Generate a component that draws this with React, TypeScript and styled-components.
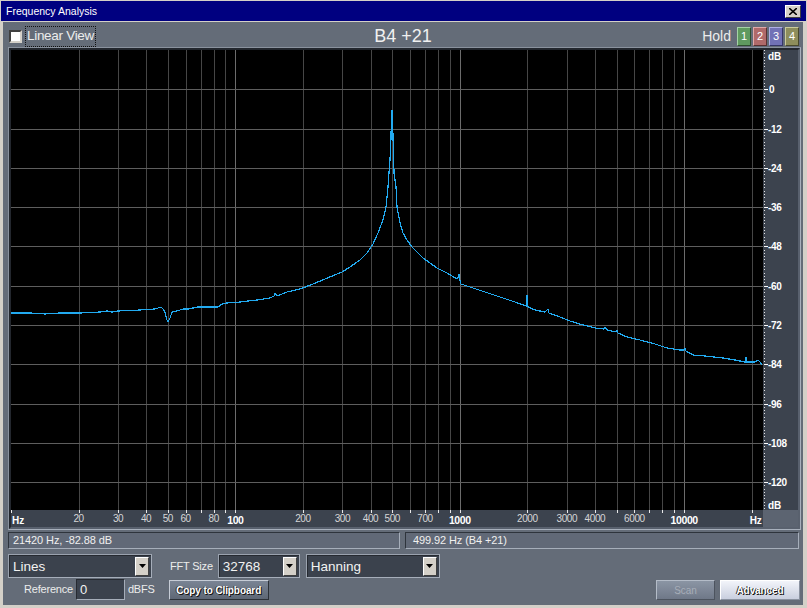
import React from "react";
import styled, { createGlobalStyle } from "styled-components";

const GlobalStyle = createGlobalStyle`
  html, body { margin: 0; padding: 0; background: #d4d0c8; }
  body { font-family: "Liberation Sans", Arial, sans-serif; }
  * { box-sizing: border-box; }
`;

// chart geometry
const PLOT_W = 752;
const PLOT_H = 460;
const PX_PER_DECADE = 224.4;
const PX_PER_DB = 39.28 / 12;
const fx = (f: number) => (Math.log10(f) - 1) * PX_PER_DECADE;
const dby = (db: number) => (12 - db) * PX_PER_DB;

// spectrum traced from the capture (absolute window pixels)
const CURVE: [number, number][] = [
  [11, 313], [30, 313], [45, 314], [60, 313], [80, 313], [100, 312], [107, 311], [112, 312],
  [118, 311], [140, 310], [155, 309], [161, 307], [163, 309], [165, 312], [167, 320], [168, 322],
  [170, 318], [172, 312], [177, 311], [183, 309], [188, 309], [198, 307], [218, 307], [222, 304],
  [227, 303], [240, 302], [257, 300], [270, 298], [274, 296], [275, 293], [277, 296], [287, 292],
  [300, 289], [313, 284], [325, 279], [342, 272], [350, 267], [360, 260], [367, 253], [373, 244],
  [378, 233], [383, 220], [386, 207], [388, 187], [389, 173], [390, 160], [390.5, 148], [391, 138],
  [391.5, 111], [392.5, 111], [393, 138], [393.5, 150], [394, 173], [396, 187], [397, 207], [400, 223],
  [403, 233], [407, 240], [412, 247], [423, 258], [437, 268], [447, 273], [457, 279], [458, 278],
  [459, 274], [460, 281], [461, 284], [470, 287], [485, 292], [500, 297], [515, 302], [526, 306],
  [527, 295], [528, 307], [535, 310], [545, 312], [548, 309], [549, 313], [560, 317], [570, 321],
  [583, 325], [595, 328], [604, 329], [605, 327], [607, 330], [616, 332], [617, 330], [618, 333],
  [627, 337], [640, 340], [655, 344], [667, 348], [680, 350], [684, 350], [685, 348], [686, 351],
  [693, 355], [705, 356], [723, 358], [735, 360], [745, 362], [746, 357], [747, 362], [755, 362],
  [758, 360], [760, 362], [762, 365],
];

const GRID_FREQS: number[] = [];
[10, 100, 1000, 10000].forEach((d) => {
  for (let m = 1; m <= 9; m++) {
    const f = m * d;
    if (f > 10 && f <= 22050) GRID_FREQS.push(f);
  }
});

const AXIS_LABELS: { f: number; text: string; major?: boolean }[] = [
  { f: 20, text: "20" }, { f: 30, text: "30" }, { f: 40, text: "40" }, { f: 50, text: "50" },
  { f: 60, text: "60" }, { f: 80, text: "80" }, { f: 100, text: "100", major: true },
  { f: 200, text: "200" }, { f: 300, text: "300" }, { f: 400, text: "400" }, { f: 500, text: "500" },
  { f: 700, text: "700" }, { f: 1000, text: "1000", major: true }, { f: 2000, text: "2000" },
  { f: 3000, text: "3000" }, { f: 4000, text: "4000" }, { f: 6000, text: "6000" },
  { f: 10000, text: "10000", major: true },
];

const DB_LEVELS = [0, -12, -24, -36, -48, -60, -72, -84, -96, -108, -120];

const Window = styled.div`
  width: 807px;
  height: 608px;
  padding: 1px;
  background: #d4d0c8;
  display: flex;
  flex-direction: column;
`;

const TitleBar = styled.div`
  height: 20px;
  background: #000080;
  display: flex;
  align-items: center;
  justify-content: space-between;
  padding: 0 5px 0 5px;
`;

const TitleText = styled.span`
  color: #fff;
  font-size: 10.5px;
`;

const CloseBtn = styled.div`
  width: 16px;
  height: 13px;
  margin-top: 1px;
  background: #d4d0c8;
  border: 1px solid;
  border-color: #fff #404040 #404040 #fff;
  display: flex;
  align-items: center;
  justify-content: center;
`;

const Body = styled.div`
  flex: 1;
  margin: 1px 3px 2px 2px;
  background: #646c78;
  padding: 0 2px 0 5px;
  display: flex;
  flex-direction: column;
`;

const Toolbar = styled.div`
  height: 25px;
  padding-top: 3px;
  display: grid;
  grid-template-columns: 1fr auto 1fr;
  align-items: center;
`;

const CheckWrap = styled.div`
  display: flex;
  align-items: center;
  gap: 3px;
  margin-left: 1px;
`;

const CheckBox = styled.div`
  width: 13px;
  height: 13px;
  background: #fff;
  border: 2px solid;
  border-color: #404040 #d4d0c8 #d4d0c8 #404040;
`;

const CheckLabel = styled.span`
  color: #ececec;
  font-size: 13.5px;
  letter-spacing: -0.3px;
  padding: 1px 1px 2px 1px;
  border: 1px dotted #111;
  line-height: 16px;
`;

const NoteTitle = styled.div`
  color: #f0f0f0;
  font-size: 18px;
  line-height: 20px;
  padding-right: 3px;
`;

const HoldGroup = styled.div`
  justify-self: end;
  display: flex;
  align-items: center;
  gap: 2px;
  margin-right: 2px;
`;

const HoldLabel = styled.span`
  color: #ececec;
  font-size: 14px;
  margin-right: 4px;
`;

const HoldBtn = styled.div<{ $bg: string; $hi: string; $lo: string }>`
  width: 14px;
  height: 19px;
  background: ${(p) => p.$bg};
  border: 1px solid;
  border-color: ${(p) => p.$hi} ${(p) => p.$lo} ${(p) => p.$lo} ${(p) => p.$hi};
  color: #fff;
  font-size: 11px;
  display: flex;
  align-items: center;
  justify-content: center;
`;

const GraphFrame = styled.div`
  border: 1px solid;
  border-color: #8a929e #a8b0bc #a8b0bc #8a929e;
`;

const GraphInner = styled.div`
  border: 2px solid;
  border-color: #23272e #59616e #59616e #23272e;
  display: grid;
  grid-template-columns: ${PLOT_W}px 35px;
  grid-template-rows: ${PLOT_H}px 17px;
`;

const PlotCell = styled.div`
  background: #000;
  display: flex;
`;

const ScaleCell = styled.div`
  background: #3c434e;
  display: flex;
`;

const CornerCell = styled.div`
  background: #5c6471;
`;

const StatusRow = styled.div`
  margin-top: 2px;
  display: grid;
  grid-template-columns: 392px 1fr;
  gap: 5px;
  padding-right: 2px;
`;

const StatusField = styled.div`
  height: 17px;
  background: #616977;
  border: 1px solid;
  border-color: #2e343c #a6aeba #a6aeba #2e343c;
  color: #f0f0f0;
  font-size: 11px;
  line-height: 15px;
  padding-left: 4px;
  letter-spacing: -0.1px;
`;

const ControlRow = styled.div<{ $top: number; $h: number }>`
  margin-top: ${(p) => p.$top}px;
  height: ${(p) => p.$h}px;
  display: flex;
  align-items: center;
`;

const Combo = styled.div<{ $w: number; $ml?: number }>`
  width: ${(p) => p.$w}px;
  height: 24px;
  margin-left: ${(p) => p.$ml ?? 0}px;
  background: #3b424d;
  border: 1px solid;
  border-color: #9aa2ae #a6aeba #a6aeba #9aa2ae;
  box-shadow: inset 1px 1px 0 #262a31;
  display: flex;
  align-items: center;
  justify-content: space-between;
  padding: 0 2px 0 4px;
  color: #f2f2f2;
  font-size: 13.5px;
`;

const DropBtn = styled.div`
  width: 14px;
  height: 19px;
  background: #d4d0c8;
  border: 1px solid;
  border-color: #fff #404040 #404040 #fff;
  display: flex;
  align-items: center;
  justify-content: center;
`;

const FieldLabel = styled.span<{ $ml: number }>`
  margin-left: ${(p) => p.$ml}px;
  color: #ececec;
  font-size: 11px;
  letter-spacing: -0.2px;
`;

const NumInput = styled.div`
  width: 49px;
  height: 21px;
  margin-left: 3px;
  background: #3b424d;
  border: 1px solid;
  border-color: #262a31 #a6aeba #a6aeba #262a31;
  color: #f2f2f2;
  font-size: 13px;
  line-height: 19px;
  padding-left: 3px;
`;

const PushBtn = styled.div<{ $w: number; $ml: number; $kind: "normal" | "disabled" | "light" }>`
  width: ${(p) => p.$w}px;
  height: 20px;
  margin-left: ${(p) => p.$ml}px;
  margin-top: 2px;
  display: flex;
  align-items: center;
  justify-content: center;
  font-size: 10px;
  font-weight: 700;
  letter-spacing: -0.1px;
  border: 1px solid;
  ${(p) =>
    p.$kind === "light"
      ? `background: linear-gradient(#f2f4fa, #c9cfdf);
         border-color: #ffffff #8a92a0 #8a92a0 #ffffff;
         color: #ffffff;
         text-shadow: 1px 1px 0 #111, -1px 0 0 #333;`
      : p.$kind === "disabled"
      ? `background: linear-gradient(#8b95a4, #6f7888);
         border-color: #b4bcc8 #4c535e #4c535e #b4bcc8;
         color: #a7aeb9;
         font-weight: 400;
         text-shadow: 1px 1px 0 #7d8694;`
      : `background: linear-gradient(#7a8494, #5e6775);
         border-color: #c6ccd6 #2c3138 #2c3138 #c6ccd6;
         color: #ffffff;
         text-shadow: 1px 1px 0 #111, -1px 0 0 #333;`}
`;

const Spacer = styled.div`
  flex: 1;
`;

const DownArrow = () => (
  <svg width="7" height="4" viewBox="0 0 7 4">
    <path d="M0 0H7L3.5 4Z" fill="#000" />
  </svg>
);

const Plot = () => (
  <svg width={PLOT_W} height={PLOT_H} shapeRendering="crispEdges">
    {GRID_FREQS.map((f) => {
      const major = f === 100 || f === 1000 || f === 10000;
      const x = Math.round(fx(f)) + 0.5;
      return (
        <line key={f} x1={x} x2={x} y1={0} y2={PLOT_H} stroke={major ? "#6c6c6c" : "#464646"} />
      );
    })}
    {DB_LEVELS.map((db) => {
      const y = Math.round(dby(db)) + 0.5;
      return <line key={db} x1={0} x2={PLOT_W} y1={y} y2={y} stroke="#5e5e5e" />;
    })}
    <polyline
      points={CURVE.map(([x, y]) => `${x - 11},${y - 50}`).join(" ")}
      fill="none"
      stroke="#22aaf0"
      strokeWidth={1.2}
    />
  </svg>
);

const DbScale = () => {
  const dots: number[] = [];
  for (let d = 12; d >= -128; d -= 1) dots.push(Math.round(dby(d)));
  return (
    <svg width={35} height={PLOT_H} fontFamily="Liberation Sans, Arial, sans-serif" fontSize={10} fontWeight={700}>
      {dots.map((y, i) => (
        <rect key={i} x={1} y={y} width={1} height={1} fill="#e8e8e8" />
      ))}
      <text x={5} y={10} fill="#fff">dB</text>
      {DB_LEVELS.map((db) => {
        const y = Math.round(dby(db));
        return (
          <g key={db}>
            <rect x={1} y={y} width={4} height={1} fill="#fff" />
            <text x={db === 0 ? 6 : 5} y={y + 4} fill="#fff" letterSpacing={-0.3}>
              {db}
            </text>
          </g>
        );
      })}
      <text x={5} y={459} fill="#fff">dB</text>
    </svg>
  );
};

const HzAxis = () => {
  const ticks = GRID_FREQS.filter((f) => f !== 20000).concat([10, 20000]);
  return (
    <ScaleCell>
      <svg width={PLOT_W} height={17} fontFamily="Liberation Sans, Arial, sans-serif">
        {ticks.map((f) => (
          <rect key={f} x={Math.round(fx(f))} y={0} width={1} height={3} fill="#e8e8e8" />
        ))}
        <text x={1} y={14} fill="#fff" fontSize={10} fontWeight={700}>Hz</text>
        {AXIS_LABELS.map((l) => (
          <text
            key={l.f}
            x={fx(l.f)}
            y={l.major ? 14 : 12}
            textAnchor="middle"
            fill={l.major ? "#fff" : "#d6d6d6"}
            fontSize={l.major ? 10.5 : 10}
            fontWeight={l.major ? 700 : 400}
            letterSpacing={-0.4}
          >
            {l.text}
          </text>
        ))}
        <text x={fx(20000) + 4} y={14} textAnchor="middle" fill="#fff" fontSize={10} fontWeight={700}>
          Hz
        </text>
      </svg>
    </ScaleCell>
  );
};

export default function App() {
  return (
    <>
      <GlobalStyle />
      <Window>
        <TitleBar>
          <TitleText>Frequency Analysis</TitleText>
          <CloseBtn>
            <svg width="8" height="7" viewBox="0 0 8 7">
              <path d="M0 0L8 7M8 0L0 7" stroke="#000" strokeWidth="1.6" />
            </svg>
          </CloseBtn>
        </TitleBar>
        <Body>
          <Toolbar>
            <CheckWrap>
              <CheckBox />
              <CheckLabel>Linear View</CheckLabel>
            </CheckWrap>
            <NoteTitle>B4 +21</NoteTitle>
            <HoldGroup>
              <HoldLabel>Hold</HoldLabel>
              <HoldBtn $bg="#5f9a5f" $hi="#a6d2a6" $lo="#2f4f2f">1</HoldBtn>
              <HoldBtn $bg="#b06a6a" $hi="#e0aaaa" $lo="#5a3030">2</HoldBtn>
              <HoldBtn $bg="#7272b6" $hi="#b0b0e4" $lo="#363668">3</HoldBtn>
              <HoldBtn $bg="#8e8e5c" $hi="#cccc9c" $lo="#48482c">4</HoldBtn>
            </HoldGroup>
          </Toolbar>

          <GraphFrame>
            <GraphInner>
              <PlotCell>
                <Plot />
              </PlotCell>
              <ScaleCell>
                <DbScale />
              </ScaleCell>
              <HzAxis />
              <CornerCell />
            </GraphInner>
          </GraphFrame>

          <StatusRow>
            <StatusField>21420 Hz, -82.88 dB</StatusField>
            <StatusField>&nbsp;499.92 Hz (B4 +21)</StatusField>
          </StatusRow>

          <ControlRow $top={5} $h={24}>
            <Combo $w={144}>
              Lines
              <DropBtn>
                <DownArrow />
              </DropBtn>
            </Combo>
            <FieldLabel $ml={18}>FFT Size</FieldLabel>
            <Combo $w={82} $ml={5}>
              32768
              <DropBtn>
                <DownArrow />
              </DropBtn>
            </Combo>
            <Combo $w={134} $ml={6}>
              Hanning
              <DropBtn>
                <DownArrow />
              </DropBtn>
            </Combo>
          </ControlRow>

          <ControlRow $top={0} $h={22}>
            <FieldLabel $ml={16}>Reference</FieldLabel>
            <NumInput>0</NumInput>
            <FieldLabel $ml={3}>dBFS</FieldLabel>
            <PushBtn $w={100} $ml={14} $kind="normal">Copy to Clipboard</PushBtn>
            <Spacer />
            <PushBtn $w={59} $ml={0} $kind="disabled">Scan</PushBtn>
            <PushBtn $w={80} $ml={5} $kind="light">Advanced</PushBtn>
            <div style={{ width: 1 }} />
          </ControlRow>
        </Body>
      </Window>
    </>
  );
}
